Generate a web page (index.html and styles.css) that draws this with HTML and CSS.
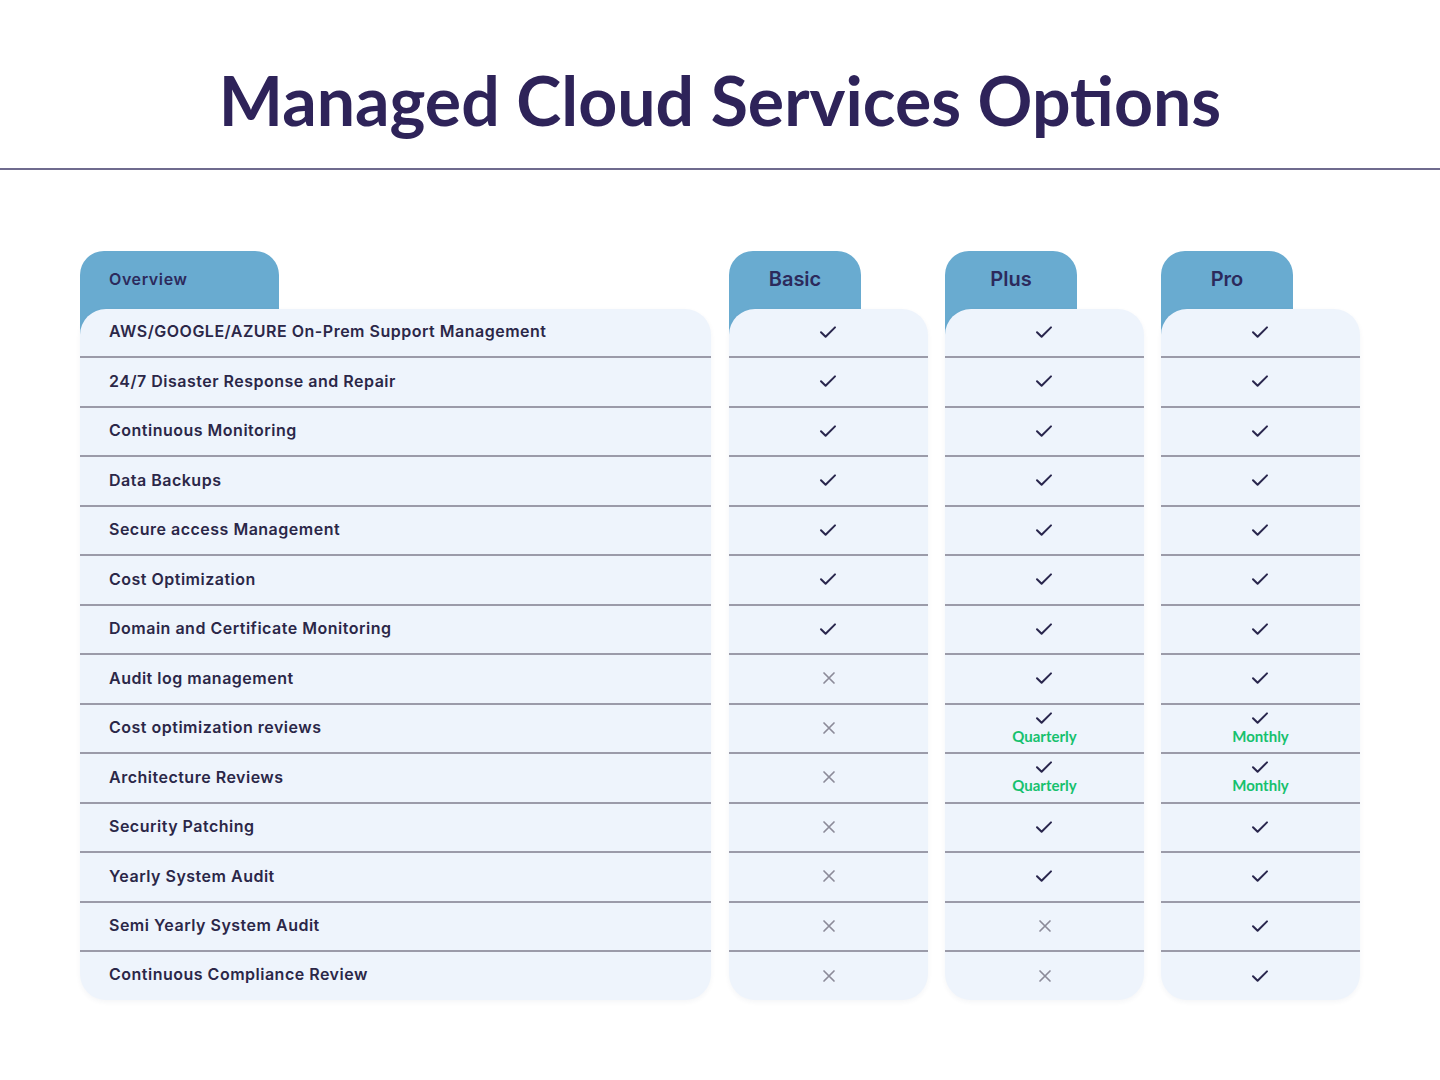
FILE: index.html
```html
<!DOCTYPE html>
<html lang="en">
<head>
<meta charset="utf-8">
<title>Managed Cloud Services Options</title>
<link rel="stylesheet" href="styles.css">
</head>
<body>
<svg class="defs" width="0" height="0" aria-hidden="true">
  <symbol id="chk" viewBox="0 0 18 14"><path d="M2 7.2 L6.6 11.8 L16 2.4" fill="none" stroke="#29264d" stroke-width="2" stroke-linecap="round" stroke-linejoin="round"/></symbol>
  <symbol id="crs" viewBox="0 0 14 14"><path d="M2 2 L12 12 M12 2 L2 12" fill="none" stroke="#8c8b99" stroke-width="1.7" stroke-linecap="round"/></symbol>
</svg>
<header class="top">
  <h1 class="title">Managed Cloud Services Options</h1>
</header>
<main class="table">
  <section class="col col-overview">
    <div class="tab tab-wide"><span class="tab-label small">Overview</span></div>
    <div class="card">
      <div class="row label">AWS/GOOGLE/AZURE On-Prem Support Management</div>
      <div class="row label">24/7 Disaster Response and Repair</div>
      <div class="row label">Continuous Monitoring</div>
      <div class="row label">Data Backups</div>
      <div class="row label">Secure access Management</div>
      <div class="row label">Cost Optimization</div>
      <div class="row label">Domain and Certificate Monitoring</div>
      <div class="row label">Audit log management</div>
      <div class="row label">Cost optimization reviews</div>
      <div class="row label">Architecture Reviews</div>
      <div class="row label">Security Patching</div>
      <div class="row label">Yearly System Audit</div>
      <div class="row label">Semi Yearly System Audit</div>
      <div class="row label">Continuous Compliance Review</div>
    </div>
  </section>

  <section class="col">
    <div class="tab"><span class="tab-label">Basic</span></div>
    <div class="card">
      <div class="row mark"><svg class="ic-chk"><use href="#chk"/></svg></div>
      <div class="row mark"><svg class="ic-chk"><use href="#chk"/></svg></div>
      <div class="row mark"><svg class="ic-chk"><use href="#chk"/></svg></div>
      <div class="row mark"><svg class="ic-chk"><use href="#chk"/></svg></div>
      <div class="row mark"><svg class="ic-chk"><use href="#chk"/></svg></div>
      <div class="row mark"><svg class="ic-chk"><use href="#chk"/></svg></div>
      <div class="row mark"><svg class="ic-chk"><use href="#chk"/></svg></div>
      <div class="row mark"><svg class="ic-crs"><use href="#crs"/></svg></div>
      <div class="row mark"><svg class="ic-crs"><use href="#crs"/></svg></div>
      <div class="row mark"><svg class="ic-crs"><use href="#crs"/></svg></div>
      <div class="row mark"><svg class="ic-crs"><use href="#crs"/></svg></div>
      <div class="row mark"><svg class="ic-crs"><use href="#crs"/></svg></div>
      <div class="row mark"><svg class="ic-crs"><use href="#crs"/></svg></div>
      <div class="row mark"><svg class="ic-crs"><use href="#crs"/></svg></div>
    </div>
  </section>

  <section class="col">
    <div class="tab"><span class="tab-label">Plus</span></div>
    <div class="card">
      <div class="row mark"><svg class="ic-chk"><use href="#chk"/></svg></div>
      <div class="row mark"><svg class="ic-chk"><use href="#chk"/></svg></div>
      <div class="row mark"><svg class="ic-chk"><use href="#chk"/></svg></div>
      <div class="row mark"><svg class="ic-chk"><use href="#chk"/></svg></div>
      <div class="row mark"><svg class="ic-chk"><use href="#chk"/></svg></div>
      <div class="row mark"><svg class="ic-chk"><use href="#chk"/></svg></div>
      <div class="row mark"><svg class="ic-chk"><use href="#chk"/></svg></div>
      <div class="row mark"><svg class="ic-chk"><use href="#chk"/></svg></div>
      <div class="row mark stacked"><svg class="ic-chk"><use href="#chk"/></svg><span class="freq">Quarterly</span></div>
      <div class="row mark stacked"><svg class="ic-chk"><use href="#chk"/></svg><span class="freq">Quarterly</span></div>
      <div class="row mark"><svg class="ic-chk"><use href="#chk"/></svg></div>
      <div class="row mark"><svg class="ic-chk"><use href="#chk"/></svg></div>
      <div class="row mark"><svg class="ic-crs"><use href="#crs"/></svg></div>
      <div class="row mark"><svg class="ic-crs"><use href="#crs"/></svg></div>
    </div>
  </section>

  <section class="col">
    <div class="tab"><span class="tab-label">Pro</span></div>
    <div class="card">
      <div class="row mark"><svg class="ic-chk"><use href="#chk"/></svg></div>
      <div class="row mark"><svg class="ic-chk"><use href="#chk"/></svg></div>
      <div class="row mark"><svg class="ic-chk"><use href="#chk"/></svg></div>
      <div class="row mark"><svg class="ic-chk"><use href="#chk"/></svg></div>
      <div class="row mark"><svg class="ic-chk"><use href="#chk"/></svg></div>
      <div class="row mark"><svg class="ic-chk"><use href="#chk"/></svg></div>
      <div class="row mark"><svg class="ic-chk"><use href="#chk"/></svg></div>
      <div class="row mark"><svg class="ic-chk"><use href="#chk"/></svg></div>
      <div class="row mark stacked"><svg class="ic-chk"><use href="#chk"/></svg><span class="freq">Monthly</span></div>
      <div class="row mark stacked"><svg class="ic-chk"><use href="#chk"/></svg><span class="freq">Monthly</span></div>
      <div class="row mark"><svg class="ic-chk"><use href="#chk"/></svg></div>
      <div class="row mark"><svg class="ic-chk"><use href="#chk"/></svg></div>
      <div class="row mark"><svg class="ic-chk"><use href="#chk"/></svg></div>
      <div class="row mark"><svg class="ic-chk"><use href="#chk"/></svg></div>
    </div>
  </section>
</main>
</body>
</html>
```

FILE: styles.css
```css
* { box-sizing: border-box; }

html, body {
  margin: 0;
  padding: 0;
  background: #ffffff;
}

body {
  width: 1440px;
  height: 1080px;
  overflow: hidden;
  font-family: "Inter", "Noto Sans", sans-serif;
  color: #2b2748;
}

.defs {
  position: absolute;
  width: 0;
  height: 0;
  overflow: hidden;
}

.top {
  padding-top: 66px;
  padding-bottom: 34px;
  border-bottom: 2px solid #6f6b8e;
  text-align: center;
}

.title {
  margin: 0;
  font-family: "Lato", "Liberation Sans", sans-serif;
  font-weight: 700;
  font-size: 68px;
  line-height: 68px;
  color: #2e2359;
}

.table {
  display: flex;
  gap: 17px;
  padding-left: 80px;
  margin-top: 81px;
}

.col {
  width: 199px;
  display: flex;
  flex-direction: column;
}

.col-overview {
  width: 631px;
  margin-right: 1px;
}

.tab {
  width: 132px;
  height: 84px;
  background: #69abd0;
  border-radius: 24px 24px 0 0;
  display: flex;
  justify-content: center;
  padding-top: 15px;
}

.tab-wide {
  width: 199px;
  justify-content: flex-start;
  padding-left: 29px;
  padding-top: 18px;
}

.tab-label {
  font-size: 20px;
  font-weight: 600;
  line-height: 26px;
  color: #2c2a5c;
  letter-spacing: 0px;
}

.tab-label.small {
  font-size: 16px;
  line-height: 20px;
  letter-spacing: 0.6px;
}

.card {
  position: relative;
  margin-top: -26.5px;
  background: #eef4fc;
  border-radius: 26px;
  box-shadow: 0 2px 5px rgba(40, 50, 90, 0.05);
}

.row {
  height: 49.5px;
  border-bottom: 2px solid #9b9ba9;
  display: flex;
  align-items: center;
}

.row:last-child {
  border-bottom: none;
  height: 48px;
}

.label {
  padding-left: 29px;
  padding-bottom: 2px;
  font-size: 16px;
  font-weight: 600;
  color: #2b2748;
  letter-spacing: 0.5px;
}

.label:last-child {
  padding-bottom: 4px;
}

.mark {
  justify-content: center;
  padding-bottom: 1px;
}

.stacked {
  flex-direction: column;
  justify-content: center;
  padding-bottom: 0;
}

.ic-chk {
  width: 18px;
  height: 14px;
  margin-right: 1px;
}

.ic-crs {
  width: 14px;
  height: 14px;
}

.stacked .ic-chk {
  margin-top: -1px;
}

.freq {
  font-family: "Lato", "Liberation Sans", sans-serif;
  font-weight: 700;
  font-size: 15px;
  line-height: 17px;
  color: #17c16e;
  margin-top: 3px;
}
```
